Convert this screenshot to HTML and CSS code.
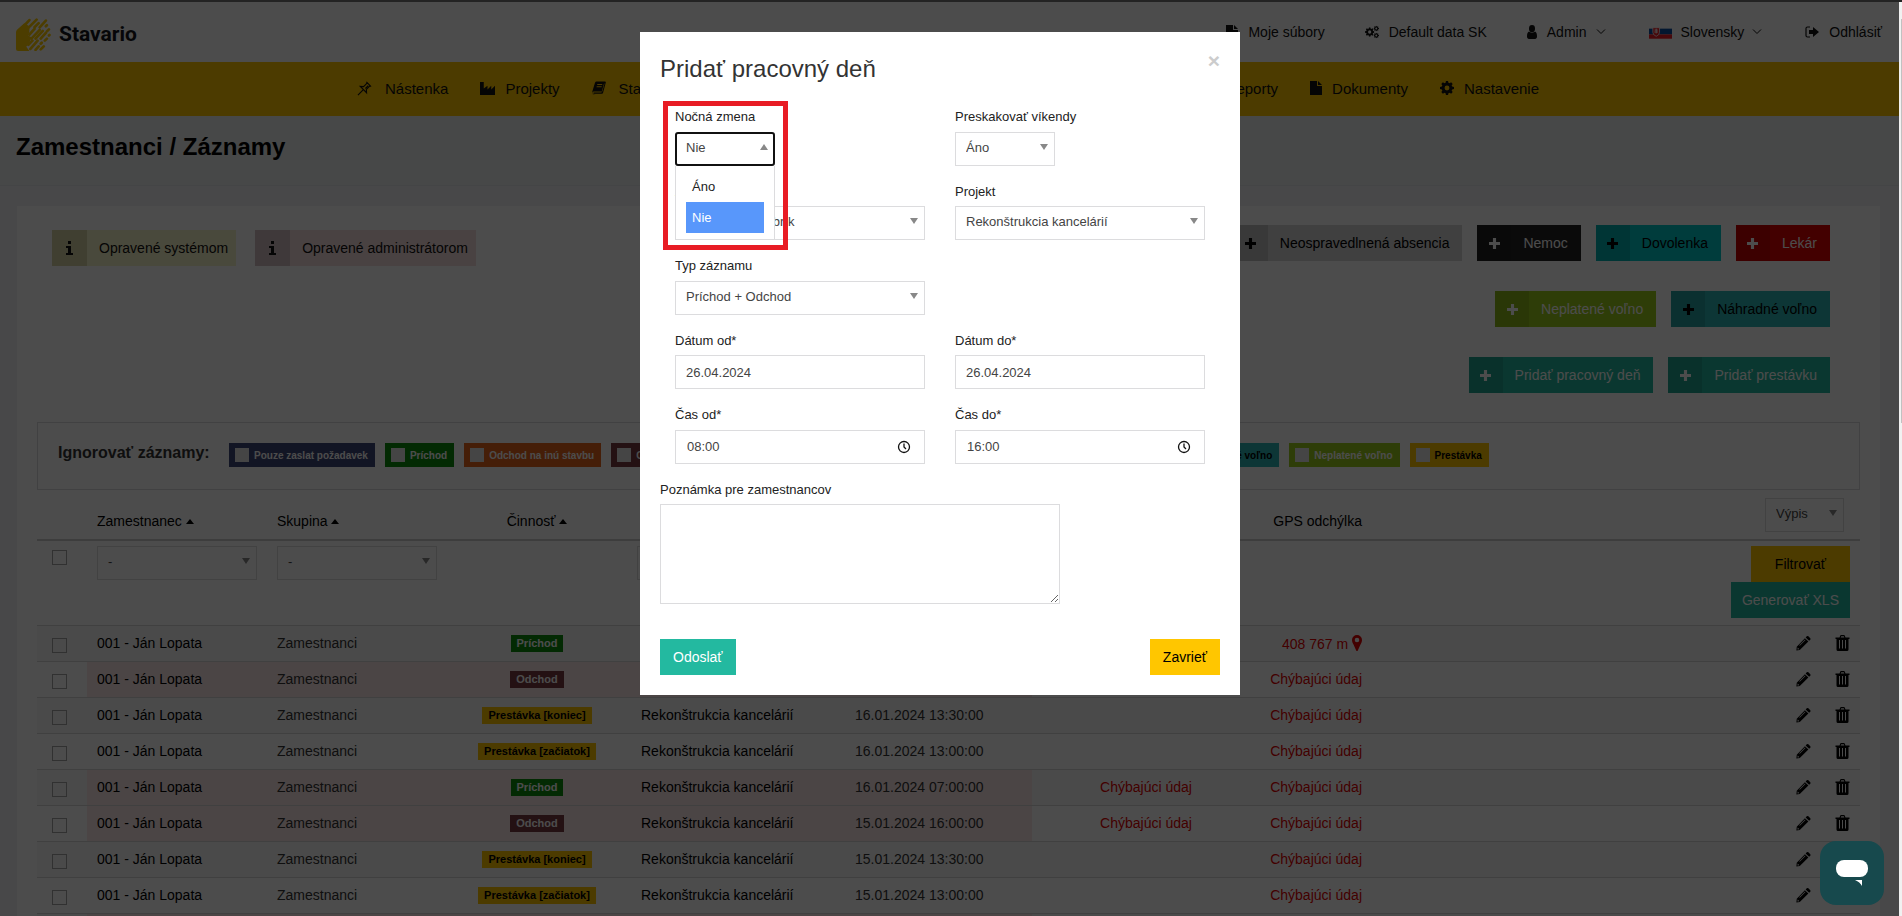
FILE: index.html
```html
<!DOCTYPE html>
<html lang="sk">
<head>
<meta charset="utf-8">
<title>Stavario – Zamestnanci / Záznamy</title>
<link rel="stylesheet" href="styles.css">
</head>
<body>
<svg class="sprite" aria-hidden="true">
  <symbol id="i-file" viewBox="0 0 12 14"><path d="M0 0h7v5h5v9H0z M8 0l4 4H8z"/></symbol>
  <symbol id="i-cog" viewBox="0 0 16 16"><path fill-rule="evenodd" d="M6.8 0h2.4l.4 2.1 1.3.6L12.7 1.500l1.800 1.800-1.200 1.800.6 1.300 2.100.4v2.400l-2.100.4-.6 1.300 1.200 1.800-1.800 1.800-1.800-1.200-1.300.6-.4 2.100H6.800l-.4-2.100-1.300-.6-1.800 1.200-1.800-1.800 1.200-1.800-.6-1.300L0 9.200V6.800l2.100-.4.6-1.300L1.500 3.300l1.800-1.800 1.800 1.200 1.300-.6zM8 5.200a2.800 2.800 0 100 5.600 2.800 2.800 0 000-5.600z"/></symbol>
  <symbol id="i-user" viewBox="0 0 10 14"><path d="M5 0a3 3.400 0 013 3.400A3 3.400 0 015 7a3 3.400 0 01-3-3.600A3 3.400 0 015 0zM2 6.500c1 1.300 5 1.300 6 0 1.500.5 2 2.500 2 5 0 1.500-.8 2.500-2 2.500H2c-1.200 0-2-1-2-2.500 0-2.500.5-4.500 2-5z"/></symbol>
  <symbol id="i-out" viewBox="0 0 14 12"><path d="M5 1H2.500Q1 1 1 2.500v7Q1 11 2.500 11H5" fill="none" stroke="currentColor" stroke-width="1.200"/><path d="M4 4h4V1l6 5-6 5V8H4z"/></symbol>
  <symbol id="i-chev" viewBox="0 0 10 6"><path d="M1 .5l4 4 4-4" fill="none" stroke="currentColor"/></symbol>
  <symbol id="i-pin" viewBox="0 0 16 16"><path d="M10 1l5 5M11 2L7 6 3.500 5.800 10.200 12.500 10 9l4-4M6.500 9.500L1 15M9 8l3-3" fill="none" stroke="currentColor" stroke-width="1.200"/></symbol>
  <symbol id="i-factory" viewBox="0 0 16 16"><path d="M0 1h4v7l4-3v4l4-4v4l4-4v10H0z"/></symbol>
  <symbol id="i-book" viewBox="0 0 14 13"><path fill-rule="evenodd" d="M4.500 0H13q1 0 .8 1L11 11.500q-.3.700-1 .7H2c-1 0-1-1.200 0-1.200h7.500L12 2h.5L10.300 10H2Q0 10 .3 11.500.5 13 2 13h9q-9.500 0-10-.5Q-.5 12 .3 10L3 1.200Q3.500 0 4.500 0zM5.400 2.500l-.3 1h5l.3-1zM4.800 4.700l-.3 1h5l.3-1z"/></symbol>
  <symbol id="i-plus" viewBox="0 0 12 12"><path d="M4.300 0h3.400v4.300H12v3.400H7.700V12H4.300V7.700H0V4.300h4.300z"/></symbol>
  <symbol id="i-info" viewBox="0 0 7 14"><path d="M2 0h3v3H2zM0 5h5v7h2v2H0v-2h2V7H0z"/></symbol>
  <symbol id="i-pencil" viewBox="0 0 16 16"><path fill-rule="evenodd" d="M11.500.8q.8-.8 1.700 0l2 2q.8.8 0 1.700L14 5.700 10.300 2zM9.500 2.800l3.700 3.700L4 15.500.4 16l.4-3.900zM1.800 12.800l-.2 2 2-.2zM9.600 4.300L3.500 10.400l.5.500 6.100-6.100z"/></symbol>
  <symbol id="i-trash" viewBox="0 0 14 16"><path fill-rule="evenodd" d="M4 2.500L4.800.5Q5 0 5.500 0h3q.5 0 .7.500l.8 2h4V4h-1v10.500q0 1.500-1.500 1.500h-9Q1 16 1 14.500V4H0V2.500zm1.200 0h3.600l-.5-1.300H5.700zM3.500 5v8.500h1V5zm3 0v8.500h1V5zm3 0v8.500h1V5z"/></symbol>
  <symbol id="i-marker" viewBox="0 0 10 16"><path fill-rule="evenodd" d="M5 0a5 5 0 015 5c0 2-.8 3-1.500 4.500L5.800 15.500q-.8 1-1.600 0L1.500 9.500C.8 8 0 7 0 5a5 5 0 015-5zm0 2.700a2.300 2.300 0 100 4.600 2.300 2.300 0 000-4.600z"/></symbol>
</svg>

<div class="page">
  <header class="topbar">
    <a class="logo" href="#">
      <svg class="logo-mark" viewBox="0 0 34 32" aria-hidden="true">
        <path d="M0 14Q0 12.500 1 11.500L8 5l5 3v5l-1 4 3 2-2 5-3 4 3 4H2q-2 0-2-2z" fill="#fc0"/>
        <g stroke="#fc0" stroke-width="2.600" stroke-linecap="round" fill="none"><path d="M7 8.500L13 2M10 11.500L20 1.500M18 9l4-4M13 16l5-5.500M23 9l6-6.500M15 20l8-8.500M29 8l1-1M12 26l4-4M19 20l7-7.500M30 13l2-2M14 30l7-8M24 20l5-5.500M32 17l.5-.5M24 25l1-1M19 31l3-3.500M28 22l2-2M24 30.500l3-3"/></g>
      </svg>
      <span>Stavario</span>
    </a>
    <nav class="usernav">
      <a href="#"><svg class="ic12"><use href="#i-file"/></svg><span>Moje súbory</span></a>
      <a href="#"><svg class="ic14" viewBox="0 0 18 16"><use href="#i-cog" x="0" y="2" width="12" height="12"/><use href="#i-cog" x="11" y="0" width="7" height="7"/><use href="#i-cog" x="11" y="9" width="7" height="7"/></svg><span>Default data SK</span></a>
      <a href="#"><svg class="ic10"><use href="#i-user"/></svg><span>Admin</span><svg class="chev"><use href="#i-chev"/></svg></a>
      <a href="#" class="lang"><svg class="flag" viewBox="0 0 24 14"><path fill="#fff" d="M0 0h24v5H0z"/><path fill="#0b4ea2" d="M0 3.500h24v6H0z"/><path fill="#ee1c25" d="M0 9.500h24V14H0z"/><path fill="#ee1c25" stroke="#fff" stroke-width=".8" d="M4 2.500h7v5q0 2.500-3.500 4Q4 10 4 7.500z"/><path stroke="#fff" d="M7.500 3.500v5M5.800 5h3.400M5.500 7h4"/></svg><span>Slovensky</span><svg class="chev"><use href="#i-chev"/></svg></a>
      <a href="#"><svg class="ic14"><use href="#i-out"/></svg><span>Odhlásiť</span></a>
    </nav>
  </header>

  <nav class="mainnav">
    <div class="mainnav-inner">
      <div class="navgroup">
        <a href="#"><svg class="ic16"><use href="#i-pin"/></svg>Nástenka</a>
        <a href="#" class="tight"><svg class="ic16"><use href="#i-factory"/></svg>Projekty</a>
        <a href="#"><svg class="ic14"><use href="#i-book"/></svg>Stavebný denník</a>
        <a href="#"><svg class="ic10"><use href="#i-user"/></svg>Zamestnanci</a>
      </div>
      <div class="navgroup">
        <a href="#"><svg class="ic12"><use href="#i-file"/></svg>Reporty</a>
        <a href="#" class="tight"><svg class="ic12"><use href="#i-file"/></svg>Dokumenty</a>
        <a href="#" class="tight"><svg class="ic14"><use href="#i-cog"/></svg>Nastavenie</a>
      </div>
    </div>
  </nav>

  <div class="heading"><h1>Zamestnanci / Záznamy</h1></div>

  <main class="panel">
    <div class="tools">
      <div class="legend">
        <span class="flagged sys"><i><svg class="info"><use href="#i-info"/></svg></i><b>Opravené systémom</b></span>
        <span class="flagged adm"><i><svg class="info"><use href="#i-info"/></svg></i><b>Opravené administrátorom</b></span>
      </div>
      <div class="actions">
        <div class="arow">
          <button class="act grey"><i><svg><use href="#i-plus"/></svg></i><span>Neospravedlnená absencia</span></button>
          <button class="act black"><i><svg><use href="#i-plus"/></svg></i><span>Nemoc</span></button>
          <button class="act cyan"><i><svg><use href="#i-plus"/></svg></i><span>Dovolenka</span></button>
          <button class="act red"><i><svg><use href="#i-plus"/></svg></i><span>Lekár</span></button>
        </div>
        <div class="arow">
          <button class="act lime"><i><svg><use href="#i-plus"/></svg></i><span>Neplatené voľno</span></button>
          <button class="act sea"><i><svg><use href="#i-plus"/></svg></i><span>Náhradné voľno</span></button>
        </div>
        <div class="arow">
          <button class="act teal"><i><svg><use href="#i-plus"/></svg></i><span>Pridať pracovný deň</span></button>
          <button class="act teal"><i><svg><use href="#i-plus"/></svg></i><span>Pridať prestávku</span></button>
        </div>
      </div>
    </div>

    <div class="ignore">
      <strong>Ignorovať záznamy:</strong>
      <div class="chips">
        <label class="chip navy"><input type="checkbox">Pouze zaslat požadavek</label>
        <label class="chip green"><input type="checkbox">Príchod</label>
        <label class="chip orange"><input type="checkbox">Odchod na inú stavbu</label>
        <label class="chip maroon"><input type="checkbox">Odchod</label>
        <label class="chip black"><input type="checkbox">Nemoc</label>
        <label class="chip cyan"><input type="checkbox">Dovolenka</label>
        <label class="chip red"><input type="checkbox">Lekár</label>
        <label class="chip grey wide"><input type="checkbox">Neospravedlnená absencia</label>
        <label class="chip sea"><input type="checkbox">Náhradné voľno</label>
        <label class="chip lime"><input type="checkbox">Neplatené voľno</label>
        <label class="chip amber"><input type="checkbox">Prestávka</label>
      </div>
    </div>

    <table class="records">
      <colgroup><col class="c1"><col class="c2"><col class="c2"><col class="c2"><col class="c5"><col class="c6"><col class="c7"><col class="c8"><col></colgroup>
      <thead>
        <tr>
          <th></th><th>Zamestnanec <i class="sort"></i></th><th>Skupina <i class="sort"></i></th><th class="mid">Činnosť <i class="sort"></i></th><th class="proj">Projekt</th><th>Dátum</th><th class="mid">GPS</th><th class="end">GPS odchýlka</th>
          <th class="end last"><span class="sel listing"><select aria-label="Výpis"><option>Výpis</option></select></span></th>
        </tr>
      </thead>
      <tbody>
        <tr class="filter">
          <td><input type="checkbox" class="cb" aria-label="Vybrať všetko"></td>
          <td><span class="sel"><select aria-label="Zamestnanec"><option>-</option></select></span></td>
          <td><span class="sel"><select aria-label="Skupina"><option>-</option></select></span></td>
          <td></td>
          <td><span class="sel"><select aria-label="Projekt"><option>-</option></select></span></td>
          <td></td><td></td><td></td>
          <td class="end"><div class="fbtns"><button class="btn amber">Filtrovať</button><button class="btn teal">Generovať XLS</button></div></td>
        </tr>
      </tbody>
      <tbody id="rows"></tbody>
    </table>
  </main>
</div>

<div class="overlay">
  <section class="modal" role="dialog" aria-labelledby="mt">
    <div class="modal-head"><h2 id="mt">Pridať pracovný deň</h2><button class="close" aria-label="Zavrieť okno">×</button></div>
    <form class="grid">
      <div class="field small open">
        <label for="night">Nočná zmena</label>
        <span class="sel"><select id="night"><option>Nie</option><option>Áno</option></select></span>
        <ul class="dropdown" role="listbox"><li role="option">Áno</li><li role="option" class="on" aria-selected="true">Nie</li></ul>
        <span class="callout"></span>
      </div>
      <div class="field small"><label for="skip">Preskakovať víkendy</label><span class="sel"><select id="skip"><option>Áno</option></select></span></div>
      <div class="field"><label for="emp">Zamestnanec</label><span class="sel"><select id="emp"><option>004 - Adam Dubrík</option></select></span></div>
      <div class="field"><label for="proj">Projekt</label><span class="sel"><select id="proj"><option>Rekonštrukcia kancelárií</option></select></span></div>
      <div class="field full"><label for="type">Typ záznamu</label><span class="sel"><select id="type"><option>Príchod + Odchod</option></select></span></div>
      <div class="field"><label for="d1">Dátum od*</label><input id="d1" type="text" value="26.04.2024"></div>
      <div class="field"><label for="d2">Dátum do*</label><input id="d2" type="text" value="26.04.2024"></div>
      <div class="field"><label for="t1">Čas od*</label><span class="time"><input id="t1" type="text" value="08:00"><svg viewBox="0 0 14 14"><circle cx="7" cy="7" r="5.500"/><path d="M7 3.500V7l2 2"/></svg></span></div>
      <div class="field"><label for="t2">Čas do*</label><span class="time"><input id="t2" type="text" value="16:00"><svg viewBox="0 0 14 14"><circle cx="7" cy="7" r="5.500"/><path d="M7 3.500V7l2 2"/></svg></span></div>
    </form>
    <div class="note"><label for="note">Poznámka pre zamestnancov</label><textarea id="note"></textarea></div>
    <div class="modal-foot"><button class="btn teal">Odoslať</button><button class="btn amber">Zavrieť</button></div>
  </section>
</div>

<button class="chat" aria-label="Chat"><svg viewBox="0 0 32 26"><rect width="32" height="17" rx="8"/><path d="M19 20h7v6q-2-4-7-6z"/></svg></button>
<div class="scrollbar"><div class="thumb"></div></div>
<script src="rows.js"></script>
</body>
</html>
```
FILE: rows.js
```js
const rows = [
  ["green", "Príchod", "16.01.2024 14:00:00", false, false, "dist"],
  ["maroon", "Odchod", "16.01.2024 13:45:00", true, true],
  ["amber", "Prestávka [koniec]", "16.01.2024 13:30:00"],
  ["amber", "Prestávka [začiatok]", "16.01.2024 13:00:00"],
  ["green", "Príchod", "16.01.2024 07:00:00", true, true],
  ["maroon", "Odchod", "15.01.2024 16:00:00", true, true],
  ["amber", "Prestávka [koniec]", "15.01.2024 13:30:00"],
  ["amber", "Prestávka [začiatok]", "15.01.2024 13:00:00"]
];
document.getElementById("rows").innerHTML = rows.map(([color, kind, date, edited, noGps, dist]) => `
  <tr class="${edited ? "edited" : ""}">
    <td><input type="checkbox" class="cb" aria-label="Vybrať"></td>
    <td><a href="#">001 - Ján Lopata</a></td>
    <td>Zamestnanci</td>
    <td class="mid"><span class="badge ${color}">${kind}</span></td>
    <td class="proj"><a href="#">Rekonštrukcia kancelárií</a></td>
    <td>${date}</td>
    <td class="mid bad">${noGps ? "Chýbajúci údaj" : ""}</td>
    <td class="end bad">${dist ? '408 767 m <svg class="marker"><use href="#i-marker"/></svg>' : "Chýbajúci údaj"}</td>
    <td class="end"><span class="rowacts"><a href="#" aria-label="Upraviť"><svg><use href="#i-pencil"/></svg></a><a href="#" aria-label="Zmazať"><svg><use href="#i-trash"/></svg></a></span></td>
  </tr>`).join("") + '<tr class="edited"><td></td><td></td><td></td><td></td><td></td><td></td><td></td><td></td><td></td></tr>';
```
FILE: styles.css
```css
* { box-sizing: border-box; }
html, body { height: 100%; }
body {
  margin: 0;
  overflow: hidden;
  font-family: "Liberation Sans", Arial, sans-serif;
  font-size: 14px;
  color: #333;
  background: #f0f2f6;
}
a { color: inherit; text-decoration: none; }
button { font: inherit; border: 0; cursor: pointer; }
svg { fill: currentColor; flex: none; }
.sprite { display: none; }
.ic10 { width: 10px; height: 14px; }
.ic12 { width: 12px; height: 14px; }
.ic14 { width: 14px; height: 14px; }
.ic16 { width: 15px; height: 15px; }

.navy { background: #3f4678; color: #fff; }
.green { background: #0c8c0c; color: #fff; }
.orange { background: #e8641c; color: #fff; }
.maroon { background: #7a3a40; color: #fff; }
.grey { background: #d6d6d6; color: #000; }
.black { background: #232323; color: #fff; }
.cyan { background: #00c8c8; color: #000; }
.red { background: #e00000; color: #fff; }
.lime { background: #9ccc1c; color: #fff; }
.sea { background: #2cb5b5; color: #000; }
.teal { background: #23b9a0; color: #fff; }
.amber { background: #ffc600; color: #000; }

.page { height: 100%; overflow: hidden; border-top: 2px solid #777; }
.topbar {
  display: flex;
  justify-content: space-between;
  align-items: center;
  height: 60px;
  padding: 0 20px 0 16px;
  background: #fff;
}
.logo { display: flex; align-items: center; gap: 8px; padding-top: 4px; color: #14161c; font: bold 21px Roboto, sans-serif; }
.logo-mark { width: 35px; height: 33px; }
.usernav { display: flex; gap: 40px; color: #111; }
.usernav a { display: flex; align-items: center; gap: 10px; }
.chev { width: 10px; height: 6px; margin-right: 3px; }
.flag { width: 23px; height: 14px; }
.usernav .lang { gap: 8px; }

.mainnav { padding-right: 6px; background: #ffc600; color: #111; }
.mainnav-inner { display: flex; justify-content: space-between; max-width: 1182px; height: 54px; margin: 0 auto; padding-bottom: 2px; }
.navgroup { display: flex; gap: 32px; }
.navgroup a { display: flex; align-items: center; gap: 13px; font-size: 15px; }
.navgroup .tight { gap: 10px; }

.heading { height: 70px; padding: 17px 16px 0; border-bottom: 1px solid #e4e6ea; background: #eff0f2; }
h1 { margin: 0; font-size: 24px; line-height: 28px; color: #000; }

.panel { margin: 20px 22px 0 17px; padding: 19px 20px; background: #fff; }
.tools { display: flex; justify-content: space-between; padding: 0 30px 29px 15px; }
.legend { display: flex; gap: 19px; padding-top: 5px; }
.flagged { display: flex; height: 36px; }
.flagged i { display: flex; align-items: center; justify-content: center; width: 35px; }
.flagged b { display: flex; align-items: center; padding: 0 8px 0 12px; font-weight: normal; }
.info { width: 7px; height: 14px; }
.sys { background: #f6f3c8; color: #111; }
.sys i { background: #d5d2a6; }
.adm { background: #f3dcdc; color: #111; }
.adm i { background: #d3bfc1; }
.actions { display: flex; flex-direction: column; align-items: flex-end; gap: 30px; }
.arow { display: flex; gap: 15px; }
.act { display: flex; height: 36px; padding: 0; }
.act i { display: flex; align-items: center; justify-content: center; width: 34px; height: 36px; background: rgba(0, 0, 0, .1); }
.act svg { width: 11px; height: 11px; }
.act span { padding: 0 13px 0 12px; line-height: 36px; }

.ignore { display: flex; height: 68px; padding: 20px; border: 1px solid #d9dbde; }
.ignore strong { width: 171px; font-size: 16px; line-height: 20px; }
.chips { display: flex; gap: 10px; }
.chip { display: flex; align-items: center; gap: 5px; height: 24px; padding: 0 7px 0 6px; font-size: 10px; font-weight: bold; white-space: nowrap; }
.wide { width: 233px; }
.chip input { appearance: none; width: 14px; height: 14px; margin: 0; background: #e6e6e6; }

.records { width: 100%; border-collapse: collapse; table-layout: fixed; }
.c1 { width: 50px; }
.c2 { width: 180px; }
.c5 { width: 218px; }
.c6 { width: 187px; }
.c7 { width: 228px; }
.c8 { width: 112px; }
th { height: 50px; padding: 12px 10px 0; font-weight: normal; text-align: left; color: #000; border-bottom: 2px solid #ccc; }
th.last { padding: 0 16px 0 0; }
td { height: 36px; padding: 0 10px; border-top: 1px solid #d5d6d8; white-space: nowrap; }
td a { color: #000; }
.proj { padding-left: 14px; }
.mid { text-align: center; }
.end { text-align: right; }
.bad { color: #e00000; }
td:first-child { padding-left: 15px; }
.filter td { height: 85px; padding-top: 5px; vertical-align: top; border-top: 0; }
.sort { display: inline-block; border: 4px solid transparent; border-top: 0; border-bottom: 5px solid #000; vertical-align: 2px; }
.cb { appearance: none; display: block; width: 15px; height: 15px; margin: 4px 0 0; border: 1px solid #a5a5a5; }
#rows tr:nth-child(odd) { background: #f9f9f9; }
#rows .edited td:nth-child(n+2):nth-child(-n+6) { background: #fae8e8; }
.badge { display: inline-block; padding: 0 6px; font-size: 11px; font-weight: bold; line-height: 17px; }
.marker { width: 10px; height: 16px; vertical-align: -2px; }
.rowacts { display: flex; justify-content: flex-end; gap: 24px; }
.rowacts svg { display: block; width: 15px; height: 16px; }
.fbtns { display: flex; flex-direction: column; align-items: flex-end; }
.fbtns .btn { padding: 0 11px; }
.fbtns .amber { padding: 0 24px; }
.btn { height: 36px; padding: 0 13px; }

.sel { position: relative; display: block; width: 100%; }
.sel::after {
  content: "";
  position: absolute;
  top: 12px;
  right: 7px;
  border: 4px solid transparent;
  border-bottom: 0;
  border-top: 6px solid #888;
}
select, input[type="text"], textarea {
  display: block;
  width: 100%;
  height: 34px;
  padding: 0 10px;
  font: 13px "Liberation Sans", Arial, sans-serif;
  color: #444;
  background: #fff;
  border: 1px solid #dcdcde;
  border-radius: 0;
}
select { appearance: none; padding-bottom: 3px; }
.listing { display: inline-block; width: 79px; }

.overlay {
  position: fixed;
  inset: 0;
  display: flex;
  justify-content: center;
  align-items: flex-start;
  padding: 32px 22px 0 0;
  background: rgba(0, 0, 0, .7);
}
.modal { width: 600px; padding: 20px; background: #fff; color: #222; }
.modal-head { display: flex; justify-content: space-between; align-items: flex-start; height: 55px; }
h2 { margin: 0; padding-top: 3px; font-size: 24px; font-weight: normal; line-height: 28px; color: #333; }
.close { padding: 0; background: none; color: #ccc; font-size: 21px; font-weight: bold; line-height: 18px; }
.grid { display: grid; grid-template-columns: 1fr 1fr; gap: 16px 30px; padding: 0 15px; }
.field label, .note label { display: block; margin-bottom: 5px; font-size: 13px; line-height: 1.5; }
.small .sel { width: 100px; }
.full { grid-column: 1 / -1; }
.full .sel { width: calc(50% - 15px); }
.open { position: relative; }
.open select { border: 2px solid #111; border-radius: 3px; padding-left: 9px; }
.open .sel::after { border-top: 0; border-bottom: 6px solid #888; }
.dropdown {
  position: absolute;
  z-index: 1;
  top: 100%;
  left: 0;
  width: 100px;
  margin: 0;
  padding: 5px 10px 6px;
  list-style: none;
  font-size: 13px;
  background: #fff;
  border: 1px solid #dcdcde;
  border-top: 0;
}
.dropdown li { padding: 0 6px; line-height: 31px; }
.dropdown .on { background: #5897fb; color: #fff; }
.callout { position: absolute; z-index: 2; top: -6px; left: -12px; width: 125px; height: 149px; border: 5px solid #e81c24; }
.time { position: relative; display: block; }
.time input { padding-left: 11px; }
.time svg { position: absolute; top: 10px; right: 14px; width: 14px; height: 14px; fill: none; stroke: #111; stroke-width: 1.3; }
.note { padding-top: 16px; }
.note textarea { width: 400px; height: 100px; resize: both; }
.modal-foot { display: flex; justify-content: space-between; padding-top: 35px; }

.chat {
  position: fixed;
  right: 18px;
  bottom: 11px;
  display: flex;
  align-items: center;
  justify-content: center;
  width: 64px;
  height: 64px;
  padding: 0 0 0 0;
  border-radius: 16px;
  background: #17494d;
  color: #fff;
}
.chat svg { width: 32px; height: 26px; }

.scrollbar { position: fixed; top: 2px; right: 0; bottom: 0; width: 3px; padding: 17px 0 0 2px; background: #f1f1f1; }
.thumb { height: 45%; background: #c1c1c1; }
```
